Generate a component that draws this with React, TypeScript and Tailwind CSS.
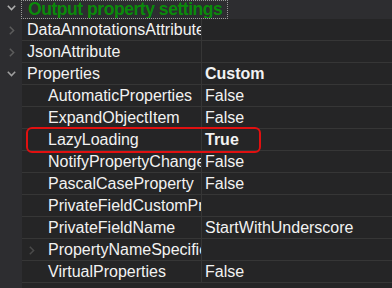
import React from "react";

type Row = {
  name: string;
  value?: string;
  bold?: boolean;
  indent?: boolean;
  chevron?: "right" | "down";
  innerChevron?: boolean;
};

const rows: Row[] = [
  { name: "DataAnnotationsAttribute", chevron: "right" },
  { name: "JsonAttribute", chevron: "right" },
  { name: "Properties", value: "Custom", bold: true, chevron: "down" },
  { name: "AutomaticProperties", value: "False", indent: true },
  { name: "ExpandObjectItem", value: "False", indent: true },
  { name: "LazyLoading", value: "True", bold: true, indent: true },
  { name: "NotifyPropertyChanged", value: "False", indent: true },
  { name: "PascalCaseProperty", value: "False", indent: true },
  { name: "PrivateFieldCustomPrefix", indent: true },
  { name: "PrivateFieldName", value: "StartWithUnderscore", indent: true },
  { name: "PropertyNameSpecifier", indent: true, innerChevron: true },
  { name: "VirtualProperties", value: "False", indent: true },
];

function ChevronDown({ color }: { color: string }) {
  return (
    <svg width="9" height="6" viewBox="0 0 9 6">
      <polyline points="0.8,0.8 4.5,4.6 8.2,0.8" fill="none" stroke={color} strokeWidth="1.5" />
    </svg>
  );
}

function ChevronRight({ color }: { color: string }) {
  return (
    <svg width="6" height="9" viewBox="0 0 6 9">
      <polyline points="0.8,0.8 4.6,4.5 0.8,8.2" fill="none" stroke={color} strokeWidth="1.5" />
    </svg>
  );
}

export default function App() {
  return (
    <div
      className="relative w-[392px] h-[288px] overflow-hidden bg-[#252526] text-[#f2f2f2] text-[16px] leading-none"
      style={{ fontFamily: '"Liberation Sans", Arial, sans-serif' }}
    >
      {/* header */}
      <div className="flex h-[19px] bg-[#2d2d30]">
        <div className="w-[21px] flex items-center justify-center pb-[4px] pl-[1px]">
          <ChevronDown color="#b0b0b0" />
        </div>
        <div className="w-[207px] h-[19px] border border-dotted border-[#9a9a9a] flex items-start pl-[6px] overflow-hidden">
          <span className="text-[#0b8a0b] font-bold text-[17.5px] leading-none mt-[0px] tracking-[-0.45px] whitespace-nowrap">
            Output property settings
          </span>
        </div>
        <div className="flex-1" />
      </div>
      <div className="flex">
        <div className="w-[22px] shrink-0 bg-[#2d2d30] h-[269px] flex flex-col">
          {rows.map((r, i) => (
            <div key={i} className="h-[22px] flex items-center justify-center pl-[1px]">
              {r.chevron === "right" && <ChevronRight color="#5c5c5c" />}
              {r.chevron === "down" && <ChevronDown color="#a0a0a0" />}
            </div>
          ))}
        </div>
        <div className="flex-1 flex flex-col">
          {rows.map((r, i) => (
            <div key={i} className="h-[22px] flex border-b border-[#363636]">
              <div
                className={`w-[179px] shrink-0 relative flex items-center overflow-hidden whitespace-nowrap ${
                  r.indent ? "pl-[26px]" : "pl-[5px]"
                }`}
              >
                {r.innerChevron && (
                  <span className="absolute left-[7px] top-[7px]">
                    <ChevronRight color="#4a4a4a" />
                  </span>
                )}
                <span className="pt-[1px]">{r.name}</span>
              </div>
              <div className="w-[1px] bg-[#363636]" />
              <div className={`flex-1 flex items-center pl-[3px] whitespace-nowrap ${r.bold ? "font-bold" : ""}`}>
                <span className="pt-[1px]">{r.value ?? ""}</span>
              </div>
            </div>
          ))}
        </div>
      </div>
      {/* highlight */}
      <div className="absolute left-[26px] top-[127px] w-[235px] h-[26px] border-2 border-[#e01010] rounded-[6px]" />
    </div>
  );
}
